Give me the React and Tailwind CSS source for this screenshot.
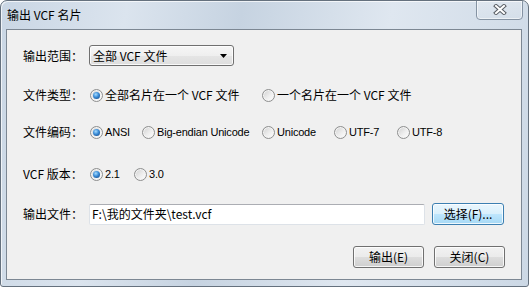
import React from "react";

const LAT = { fontFamily: '"Liberation Sans", "Noto Sans CJK SC", sans-serif' };

function Radio({ checked }) {
  return (
    <span className="w-[13px] h-[13px] rounded-full border border-[#8e8f8f] bg-[linear-gradient(135deg,#cfcfcf_0%,#eeeeee_55%,#ffffff_100%)] flex items-center justify-center shrink-0 shadow-[inset_0_0_0_1px_#f4f4f4]">
      {checked && (
        <span className="w-[7px] h-[7px] rounded-full bg-[radial-gradient(circle_at_40%_35%,#a6dcff_0%,#3a8bd6_45%,#0d3d7a_100%)]" />
      )}
    </span>
  );
}

function Opt({ checked, children, w, latin }) {
  return (
    <div className={`flex items-center gap-[2px] shrink-0 ${w || ""}`}>
      <Radio checked={checked} />
      <span
        className={latin ? "text-[11px] leading-none tracking-[-0.2px]" : "text-[12px] leading-none"}
        style={latin ? LAT : undefined}
      >
        {children}
      </span>
    </div>
  );
}

function Btn({ children, def, w }) {
  return (
    <div
      className={`${w} h-[22px] rounded-[3px] border flex items-center justify-center text-[12px] leading-none shadow-[inset_0_0_0_1px_rgba(255,255,255,0.8)] ${
        def
          ? "border-[#3c7fb1] bg-[linear-gradient(180deg,#eaf6fd_0%,#d9f0fc_50%,#bee6fd_51%,#a7d9f5_100%)]"
          : "border-[#707070] bg-[linear-gradient(180deg,#f2f2f2_0%,#ebebeb_50%,#dddddd_51%,#cfcfcf_100%)]"
      }`}
    >
      {children}
    </div>
  );
}

export default function App() {
  return (
    <div
      className="w-[529px] h-[287px] flex flex-col overflow-hidden rounded-t-[7px] rounded-b-[3px] border border-[#65717e] bg-[linear-gradient(100deg,#c9d6e4_0%,#dbe4ee_22%,#c6d3e1_42%,#dfe7f0_68%,#ccd8e5_100%)] shadow-[inset_1px_1px_0_rgba(255,255,255,0.7)] text-black"
      style={{ fontFamily: '"Noto Sans CJK SC", "Liberation Sans", sans-serif' }}
    >
      {/* title bar */}
      <div className="h-[28px] shrink-0 flex items-start">
        <div className="pl-[6px] pt-[7px] text-[12px] leading-[14px]">输出 VCF 名片</div>
        <div className="ml-auto mr-[5px] -mt-[2px] w-[47px] h-[21px] rounded-b-[4px] border border-[#8593a3] bg-[linear-gradient(180deg,rgba(255,255,255,0.25),rgba(255,255,255,0.05))] shadow-[inset_0_0_0_1px_rgba(255,255,255,0.55)] flex items-center justify-center">
          <svg width="14" height="11" viewBox="0 0 14 11">
            <path d="M3 2 L11 9 M11 2 L3 9" stroke="#5a5f66" strokeWidth="4" strokeLinecap="square" fill="none" />
            <path d="M3 2 L11 9 M11 2 L3 9" stroke="#ffffff" strokeWidth="2" strokeLinecap="square" fill="none" />
          </svg>
        </div>
      </div>

      {/* client */}
      <div className="ml-[5px] mr-[6px] mb-[6px] flex-1 border border-[#7c8793] bg-[#f0f0f0] flex flex-col pl-[16px] pr-[16px]">
        {/* row 1 */}
        <div className="mt-[15px] h-[21px] flex items-center">
          <div className="w-[66px] text-[12px] leading-none">输出范围：</div>
          <div className="w-[145px] h-[21px] rounded-[3px] border border-[#707070] bg-[linear-gradient(180deg,#f6f6f6_0%,#efefef_50%,#e5e5e5_51%,#dedede_100%)] shadow-[inset_0_0_0_1px_rgba(255,255,255,0.8)] flex items-center pl-[3px] pr-[6px]">
            <span className="text-[12px] leading-none">全部 VCF 文件</span>
            <svg className="ml-auto" width="7" height="4" viewBox="0 0 7 4">
              <path d="M0 0 H7 L3.5 4 Z" fill="#000" />
            </svg>
          </div>
        </div>

        {/* row 2 */}
        <div className="mt-[19px] h-[20px] flex items-center">
          <div className="w-[67px] text-[12px] leading-none">文件类型：</div>
          <Opt checked w="w-[172px]">全部名片在一个 VCF 文件</Opt>
          <Opt>一个名片在一个 VCF 文件</Opt>
        </div>

        {/* row 3 */}
        <div className="mt-[17px] h-[20px] flex items-center">
          <div className="w-[67px] text-[12px] leading-none">文件编码：</div>
          <Opt checked latin w="w-[52px]">ANSI</Opt>
          <Opt latin w="w-[120px]">Big-endian Unicode</Opt>
          <Opt latin w="w-[72px]">Unicode</Opt>
          <Opt latin w="w-[63px]">UTF-7</Opt>
          <Opt latin>UTF-8</Opt>
        </div>

        {/* row 4 */}
        <div className="mt-[22px] h-[20px] flex items-center">
          <div className="w-[67px] text-[12px] leading-none">VCF 版本：</div>
          <Opt checked latin w="w-[44px]">2.1</Opt>
          <Opt latin>3.0</Opt>
        </div>

        {/* row 5 */}
        <div className="mt-[19px] h-[22px] flex items-center">
          <div className="w-[66px] text-[12px] leading-none">输出文件：</div>
          <div className="w-[336px] h-[21px] bg-white border border-[#dde2e8] border-t-[#abadb3] rounded-[2px] flex items-center pl-[2px] text-[12px] leading-none">
            F:\我的文件夹\test.vcf
          </div>
          <div className="ml-[7px]">
            <Btn def w="w-[72px]">选择(F)...</Btn>
          </div>
        </div>

        {/* row 6 */}
        <div className="mt-[21px] flex justify-end gap-[10px]">
          <Btn w="w-[71px]">输出(E)</Btn>
          <Btn w="w-[71px]">关闭(C)</Btn>
        </div>
      </div>
    </div>
  );
}
